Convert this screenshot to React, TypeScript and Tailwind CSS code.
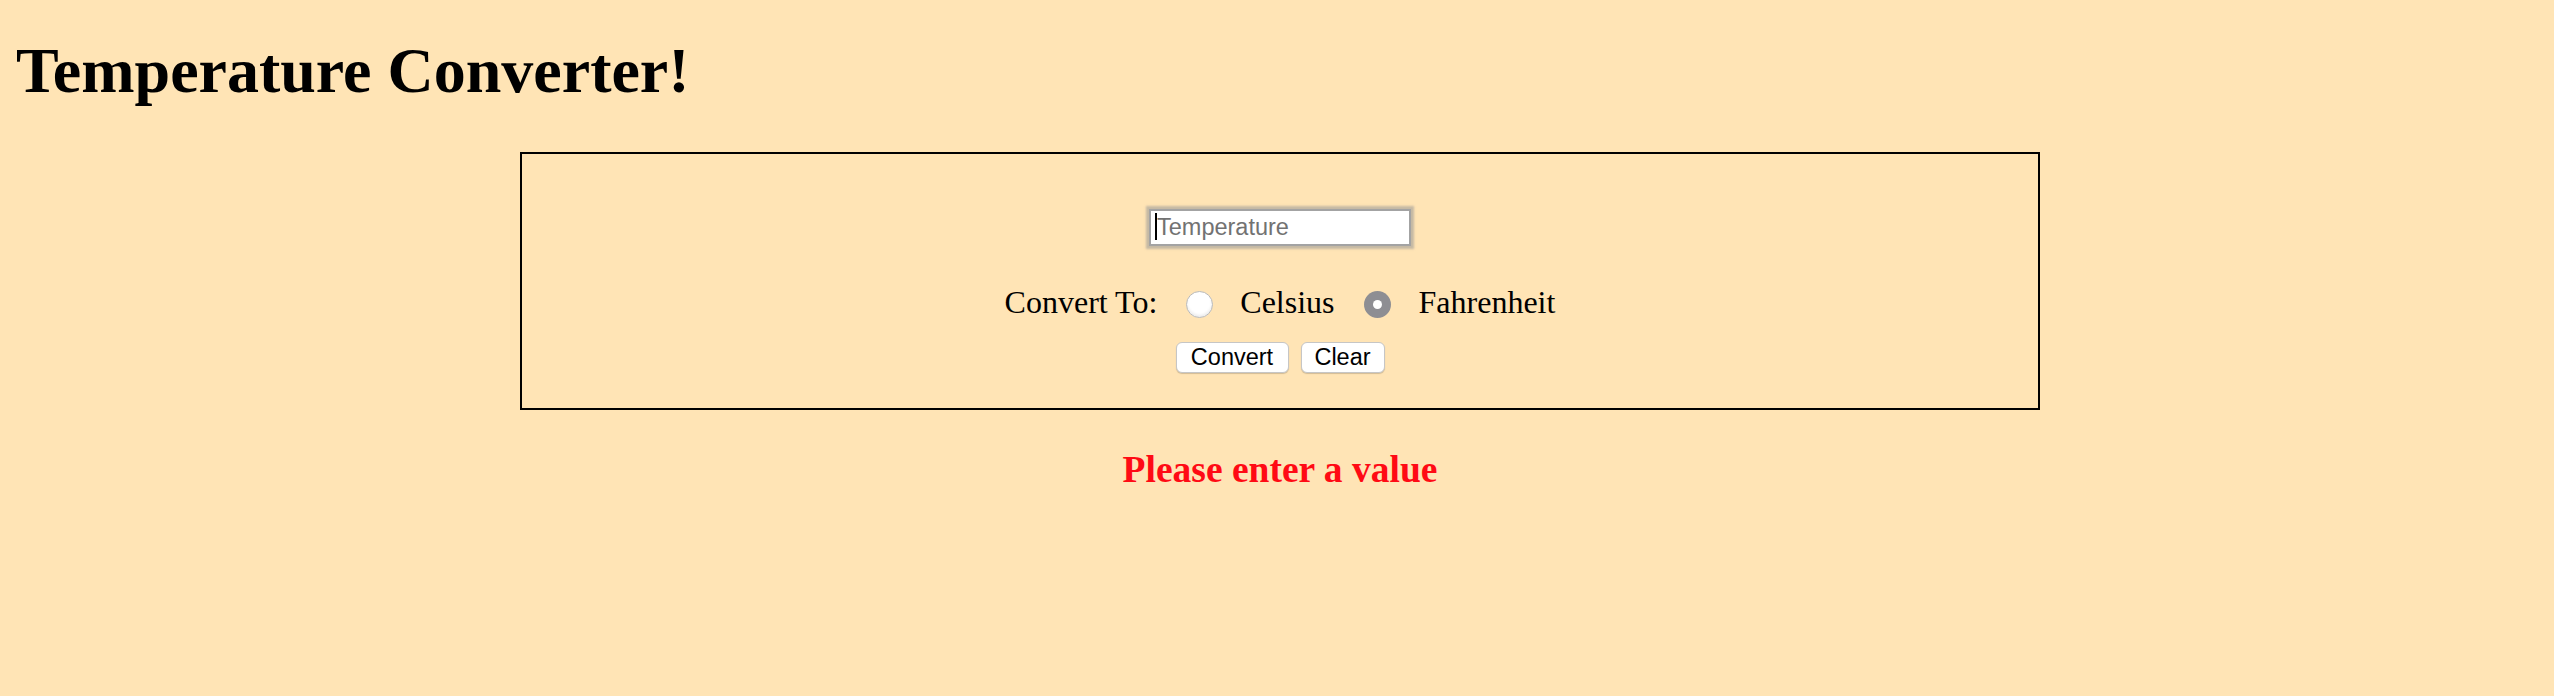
import { useState } from 'react'

type Unit = 'celsius' | 'fahrenheit'

function Radio({ checked, onSelect, label }: { checked: boolean; onSelect: () => void; label: string }) {
  return (
    <button
      type="button"
      role="radio"
      aria-checked={checked}
      aria-label={label}
      onClick={onSelect}
      className={
        checked
          ? 'mt-[7px] w-[27px] h-[27px] rounded-full bg-[#8e8e93] flex items-center justify-center shrink-0'
          : 'mt-[7px] w-[27px] h-[27px] rounded-full bg-white border border-[#b9b9b9] shadow-[inset_0_-2px_3px_rgba(0,0,0,0.08)] shrink-0'
      }
    >
      {checked && <span className="block w-[9px] h-[9px] rounded-full bg-white" />}
    </button>
  )
}

export default function App() {
  const [value, setValue] = useState('')
  const [unit, setUnit] = useState<Unit>('fahrenheit')
  const [message, setMessage] = useState('Please enter a value')

  function handleConvert() {
    const n = parseFloat(value)
    if (isNaN(n)) {
      setMessage('Please enter a value')
      return
    }
    const result = unit === 'celsius' ? ((n - 32) * 5) / 9 : (n * 9) / 5 + 32
    setMessage(`${result.toFixed(1)} ${unit === 'celsius' ? '°C' : '°F'}`)
  }

  function handleClear() {
    setValue('')
    setMessage('Please enter a value')
  }

  return (
    <div className="min-h-[696px] bg-[#ffe4b5] px-4 pb-10 text-black font-['Liberation_Serif',serif]">
      <h1 className="pt-[39px] mb-[49px] text-[64px] leading-none font-bold">Temperature Converter!</h1>

      <div className="pl-[6px]">
        <div className="mx-auto w-[1520px] border-2 border-black pt-[55px] pb-[35px] flex flex-col items-center">
          <div className="relative">
            <input
              type="text"
              value={value}
              onChange={(e) => setValue(e.target.value)}
              placeholder="Temperature"
              className="block w-[262px] h-[37px] bg-white border-2 border-[#a3a3a3] pl-[6px] pr-1 text-[23.5px] text-black placeholder:text-[#727272] font-['Liberation_Sans',Arial,sans-serif] shadow-[0_0_2px_3px_rgba(150,150,150,0.55)] outline-none"
            />
            {value === '' && <span className="absolute left-[6px] top-[4px] w-[2px] h-[27px] bg-black" />}
          </div>

          <div className="mt-[38px] flex items-start text-[32px] leading-[36px]">
            <span>Convert To:</span>
            <span className="ml-[29px] mr-[27px] flex">
              <Radio checked={unit === 'celsius'} onSelect={() => setUnit('celsius')} label="Celsius" />
            </span>
            <span>Celsius</span>
            <span className="ml-[29px] mr-[28px] flex">
              <Radio checked={unit === 'fahrenheit'} onSelect={() => setUnit('fahrenheit')} label="Fahrenheit" />
            </span>
            <span>Fahrenheit</span>
          </div>

          <div className="mt-[22px] flex gap-[12px] font-['Liberation_Sans',Arial,sans-serif] text-[23.5px] leading-none">
            <button
              type="button"
              onClick={handleConvert}
              className="w-[113px] h-[31px] bg-white border border-[#c6c6c6] rounded-[6px] shadow-[0_1px_1px_rgba(0,0,0,0.18)] flex items-center justify-center"
            >
              Convert
            </button>
            <button
              type="button"
              onClick={handleClear}
              className="w-[84px] h-[31px] bg-white border border-[#c6c6c6] rounded-[6px] shadow-[0_1px_1px_rgba(0,0,0,0.18)] flex items-center justify-center"
            >
              Clear
            </button>
          </div>
        </div>

        <h3 className="mt-[41px] text-center text-[37.5px] leading-none font-bold text-[#ff0a14]">{message}</h3>
      </div>
    </div>
  )
}
